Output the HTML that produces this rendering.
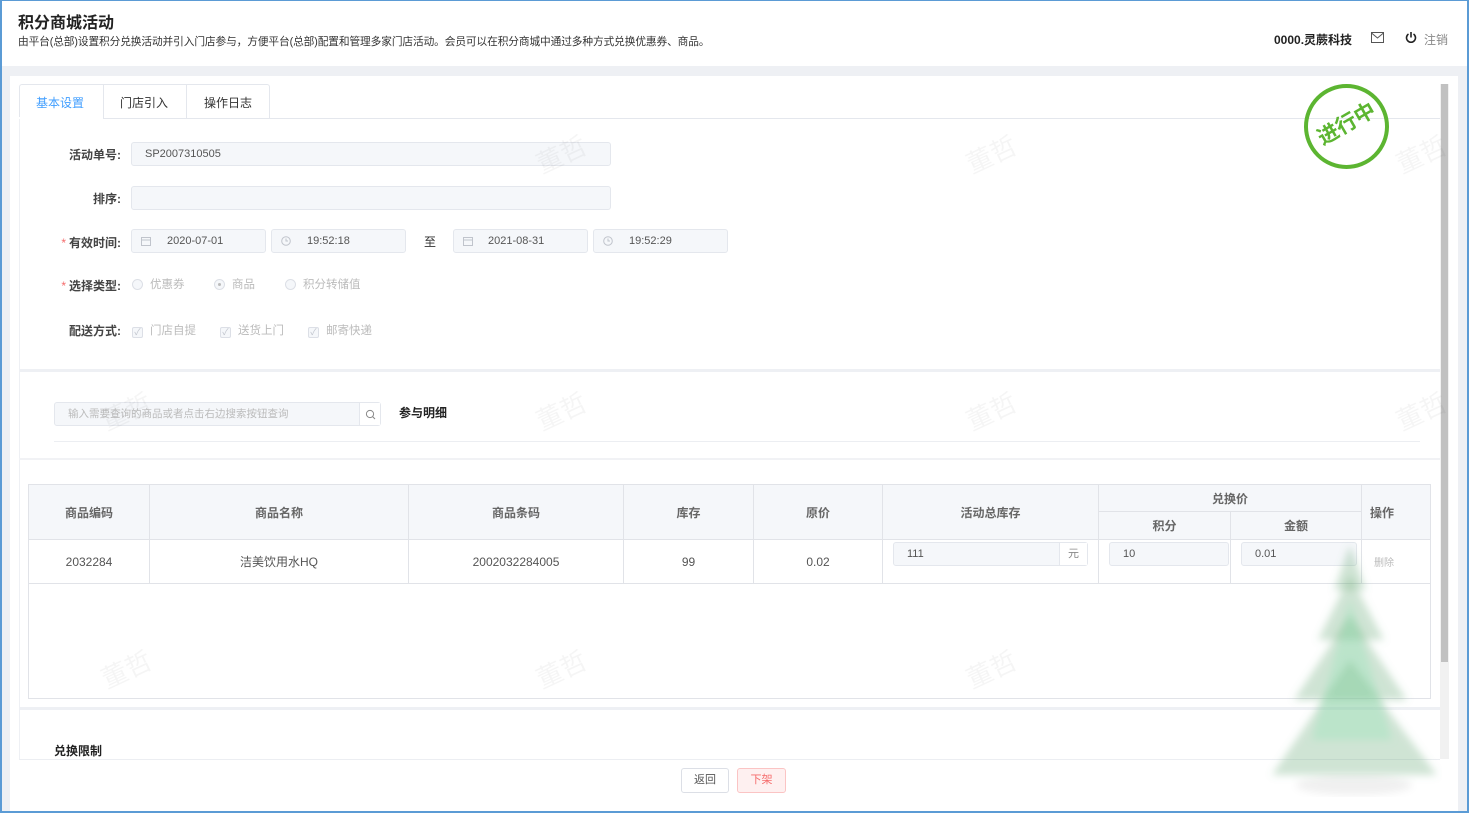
<!DOCTYPE html>
<html><head><meta charset="utf-8">
<style>
*{margin:0;padding:0;box-sizing:border-box}
body{width:1469px;height:813px;overflow:hidden;background:#eef0f4;font-family:"Liberation Sans","Noto Sans CJK SC",sans-serif;color:#333;position:relative}
.a{position:absolute}
.inp{position:absolute;background:#f5f7fa;border:1px solid #e4e7ed;border-radius:3px;height:24px;font-size:11px;color:#555;line-height:22px}
.lbl{position:absolute;width:100px;text-align:right;font-size:12px;font-weight:bold;color:#444}
.lbl b{color:#f56c6c;font-weight:normal;margin-right:3px}
.opt{position:absolute;font-size:11.5px;color:#bbb}
.rad{display:inline-block;width:11px;height:11px;border:1px solid #dcdfe6;border-radius:50%;vertical-align:-2px;margin-right:7px;background:#f5f7fa;position:relative}
.chk{display:inline-block;width:11px;height:11px;border:1px solid #dcdfe6;border-radius:2px;vertical-align:-1px;margin-right:7px;background:#f5f7fa;font-size:9px;line-height:9px;text-align:center;color:#c0c4cc}
.wm{position:absolute;font-size:26px;color:rgba(0,0,0,0.04);transform:rotate(-25deg)}
table{border-collapse:collapse;position:absolute;left:28px;top:484px;font-size:12px;color:#555}
td,th{border:1px solid #e1e3e8;text-align:center}
th{background:#f5f7fa;font-weight:bold;color:#666}
</style></head><body>
<div class="a" style="left:0;top:0;width:1469px;height:813px;border:2px solid #5b9bd5;border-top:1px solid #5b9bd5;z-index:50;pointer-events:none"></div>
<div class="a" style="left:0;top:0;width:1469px;height:66px;background:#fff"></div>
<div class="a" style="left:18px;top:14px;font-size:16px;line-height:20px;font-weight:bold;color:#222">积分商城活动</div>
<div class="a" style="left:18px;top:36px;font-size:10.7px;line-height:13px;color:#333;letter-spacing:-0.1px">由平台(总部)设置积分兑换活动并引入门店参与，方便平台(总部)配置和管理多家门店活动。会员可以在积分商城中通过多种方式兑换优惠券、商品。</div>
<div class="a" style="left:1274px;top:31px;font-size:12px;font-weight:bold;color:#222">0000.灵蕨科技</div>
<svg class="a" style="left:1371px;top:32px" width="13" height="11" viewBox="0 0 13 11"><rect x="0.5" y="0.5" width="12" height="10" fill="none" stroke="#555"/><path d="M0.5 1 L6.5 6 L12.5 1" fill="none" stroke="#555"/></svg>
<svg class="a" style="left:1405px;top:31px" width="12" height="13" viewBox="0 0 12 13"><path d="M3.5 3 A4.5 4.5 0 1 0 8.5 3" fill="none" stroke="#222" stroke-width="1.6"/><path d="M6 1 V6.5" stroke="#222" stroke-width="1.6"/></svg>
<div class="a" style="left:1424px;top:31px;font-size:12px;color:#888">注销</div>
<div class="a" style="left:10px;top:76px;width:1448px;height:735px;background:#fff"></div>
<div class="a" style="left:19px;top:84px;width:251px;height:35px;border:1px solid #e4e7ed;border-bottom:none;border-radius:3px 3px 0 0"></div>
<div class="a" style="left:19px;top:118px;width:1421px;height:1px;background:#e4e7ed"></div>
<div class="a" style="left:103px;top:84px;width:1px;height:34px;background:#e4e7ed"></div>
<div class="a" style="left:186px;top:84px;width:1px;height:34px;background:#e4e7ed"></div>
<div class="a" style="left:19px;top:117px;width:84px;height:3px;background:#fff"></div>
<div class="a" style="left:36px;top:94px;font-size:12px;color:#409eff">基本设置</div>
<div class="a" style="left:120px;top:94px;font-size:12px;color:#333">门店引入</div>
<div class="a" style="left:204px;top:94px;font-size:12px;color:#333">操作日志</div>
<div class="a" style="left:19px;top:119px;width:1px;height:640px;background:#eef0f4"></div>
<div class="lbl" style="left:21px;top:146px">活动单号:</div>
<div class="inp" style="left:131px;top:142px;width:480px;padding-left:13px">SP2007310505</div>
<div class="lbl" style="left:21px;top:190px">排序:</div>
<div class="inp" style="left:131px;top:186px;width:480px"></div>
<div class="lbl" style="left:21px;top:234px"><b>*</b>有效时间:</div>
<div class="inp" style="left:131px;top:229px;width:135px;padding-left:35px">2020-07-01</div>
<div class="inp" style="left:271px;top:229px;width:135px;padding-left:35px">19:52:18</div>
<div class="a" style="left:424px;top:233px;font-size:12px;color:#333">至</div>
<div class="inp" style="left:453px;top:229px;width:135px;padding-left:34px">2021-08-31</div>
<div class="inp" style="left:593px;top:229px;width:135px;padding-left:35px">19:52:29</div>
<svg class="a" style="left:141px;top:236px" width="10" height="10"><rect x="0.5" y="1.5" width="9" height="8" fill="none" stroke="#c0c4cc"/><line x1="0" y1="4" x2="10" y2="4" stroke="#c0c4cc"/></svg>
<svg class="a" style="left:463px;top:236px" width="10" height="10"><rect x="0.5" y="1.5" width="9" height="8" fill="none" stroke="#c0c4cc"/><line x1="0" y1="4" x2="10" y2="4" stroke="#c0c4cc"/></svg>
<svg class="a" style="left:281px;top:236px" width="10" height="10"><circle cx="5" cy="5" r="4.3" fill="none" stroke="#c0c4cc"/><path d="M5 2.5V5H7" fill="none" stroke="#c0c4cc"/></svg>
<svg class="a" style="left:603px;top:236px" width="10" height="10"><circle cx="5" cy="5" r="4.3" fill="none" stroke="#c0c4cc"/><path d="M5 2.5V5H7" fill="none" stroke="#c0c4cc"/></svg>
<div class="lbl" style="left:21px;top:277px"><b>*</b>选择类型:</div>
<div class="opt" style="left:132px;top:276px"><span class="rad"></span>优惠券</div>
<div class="opt" style="left:214px;top:276px"><span class="rad"><span style="position:absolute;left:3px;top:3px;width:3px;height:3px;background:#bbb;border-radius:50%"></span></span>商品</div>
<div class="opt" style="left:285px;top:276px"><span class="rad"></span>积分转储值</div>
<div class="lbl" style="left:21px;top:322px">配送方式:</div>
<div class="opt" style="left:132px;top:322px"><span class="chk">✓</span>门店自提</div>
<div class="opt" style="left:220px;top:322px"><span class="chk">✓</span>送货上门</div>
<div class="opt" style="left:308px;top:322px"><span class="chk">✓</span>邮寄快递</div>
<div class="a" style="left:19px;top:369px;width:1421px;height:3px;background:#eef0f4"></div>
<div class="inp" style="left:54px;top:402px;width:327px;padding-left:13px;color:#bbb;font-size:10.5px">输入需要查询的商品或者点击右边搜索按钮查询</div>
<div class="a" style="left:359px;top:403px;width:21px;height:22px;background:#fff;border-left:1px solid #e4e7ed"></div>
<svg class="a" style="left:365px;top:409px" width="11" height="11"><circle cx="5" cy="5" r="3.6" fill="none" stroke="#888"/><line x1="7.6" y1="7.6" x2="10" y2="10" stroke="#888"/></svg>
<div class="a" style="left:399px;top:404px;font-size:12px;font-weight:bold;color:#222">参与明细</div>
<div class="a" style="left:54px;top:441px;width:1366px;height:1px;background:#eceef2"></div>
<div class="a" style="left:19px;top:458px;width:1421px;height:2px;background:#f1f2f5"></div>
<table>
<tr style="height:27px"><th rowspan="2" style="width:121px">商品编码</th><th rowspan="2" style="width:259px">商品名称</th><th rowspan="2" style="width:215px">商品条码</th><th rowspan="2" style="width:130px">库存</th><th rowspan="2" style="width:129px">原价</th><th rowspan="2" style="width:216px">活动总库存</th><th colspan="2">兑换价</th><th rowspan="2" style="width:69px;text-align:left;padding-left:8px">操作</th></tr>
<tr style="height:28px"><th style="width:132px">积分</th><th style="width:131px">金额</th></tr>
<tr style="height:44px"><td>2032284</td><td>洁美饮用水HQ</td><td>2002032284005</td><td>99</td><td>0.02</td><td></td><td></td><td></td><td style="font-size:10px;color:#bbb;text-align:left;padding-left:12px">删除</td></tr>
<tr style="height:115px"><td colspan="9" style="border-top:1px solid #e1e3e8"></td></tr>
</table>
<div class="inp" style="left:893px;top:542px;width:195px;padding-left:13px">111</div>
<div class="a" style="left:1059px;top:543px;width:28px;height:22px;background:#fff;border-left:1px solid #e4e7ed;font-size:11px;color:#888;text-align:center;line-height:22px">元</div>
<div class="inp" style="left:1109px;top:542px;width:120px;padding-left:13px">10</div>
<div class="inp" style="left:1241px;top:542px;width:116px;padding-left:13px">0.01</div>
<div class="a" style="left:19px;top:707px;width:1421px;height:3px;background:#eef0f4"></div>
<div class="a" style="left:54px;top:742px;font-size:12px;font-weight:bold;color:#222">兑换限制</div>
<div class="a" style="left:19px;top:759px;width:1421px;height:1px;background:#eceef2"></div>
<div class="a" style="left:681px;top:768px;width:48px;height:25px;border:1px solid #dcdfe6;border-radius:3px;font-size:11px;text-align:center;line-height:23px;color:#555;background:#fff">返回</div>
<div class="a" style="left:737px;top:768px;width:49px;height:25px;border:1px solid #fbc4c4;border-radius:3px;font-size:11px;text-align:center;line-height:23px;color:#f56c6c;background:#fef0f0">下架</div>
<div class="a" style="left:1440px;top:84px;width:9px;height:675px;background:#f1f1f1"></div>
<div class="a" style="left:1441px;top:84px;width:7px;height:578px;background:#c1c1c1"></div>
<div class="a" style="left:1304px;top:84px;width:85px;height:85px;border:4px solid #5cb531;border-radius:50%"></div>
<div class="a" style="left:1310px;top:108px;width:72px;text-align:center;font-size:21px;font-weight:bold;color:#5cb531;transform:rotate(-30deg)">进行中</div>
<div class="wm" style="left:535px;top:135px">董哲</div><div class="wm" style="left:965px;top:135px">董哲</div><div class="wm" style="left:1395px;top:135px">董哲</div>
<div class="wm" style="left:100px;top:392px">董哲</div><div class="wm" style="left:535px;top:392px">董哲</div><div class="wm" style="left:965px;top:392px">董哲</div><div class="wm" style="left:1395px;top:392px">董哲</div>
<div class="wm" style="left:100px;top:650px">董哲</div><div class="wm" style="left:535px;top:650px">董哲</div><div class="wm" style="left:965px;top:650px">董哲</div>
<svg class="a" style="left:1262px;top:540px" width="180" height="262" viewBox="0 0 180 262">
<defs><filter id="bl"><feGaussianBlur stdDeviation="4"/></filter></defs>
<ellipse cx="92" cy="245" rx="58" ry="10" fill="rgba(0,0,0,0.06)" filter="url(#bl)"/>
<g filter="url(#bl)" fill="rgba(110,170,120,0.32)">
<path d="M88 5 L104 50 L72 50 Z"/>
<path d="M88 35 L122 100 L56 100 Z"/>
<path d="M88 75 L145 160 L32 160 Z"/>
<path d="M88 120 L175 235 L10 235 Z"/>
</g>
<g fill="rgba(140,230,180,0.3)" filter="url(#bl)"><path d="M88 60 L130 200 L50 200 Z"/></g>
</svg>
</body></html>
